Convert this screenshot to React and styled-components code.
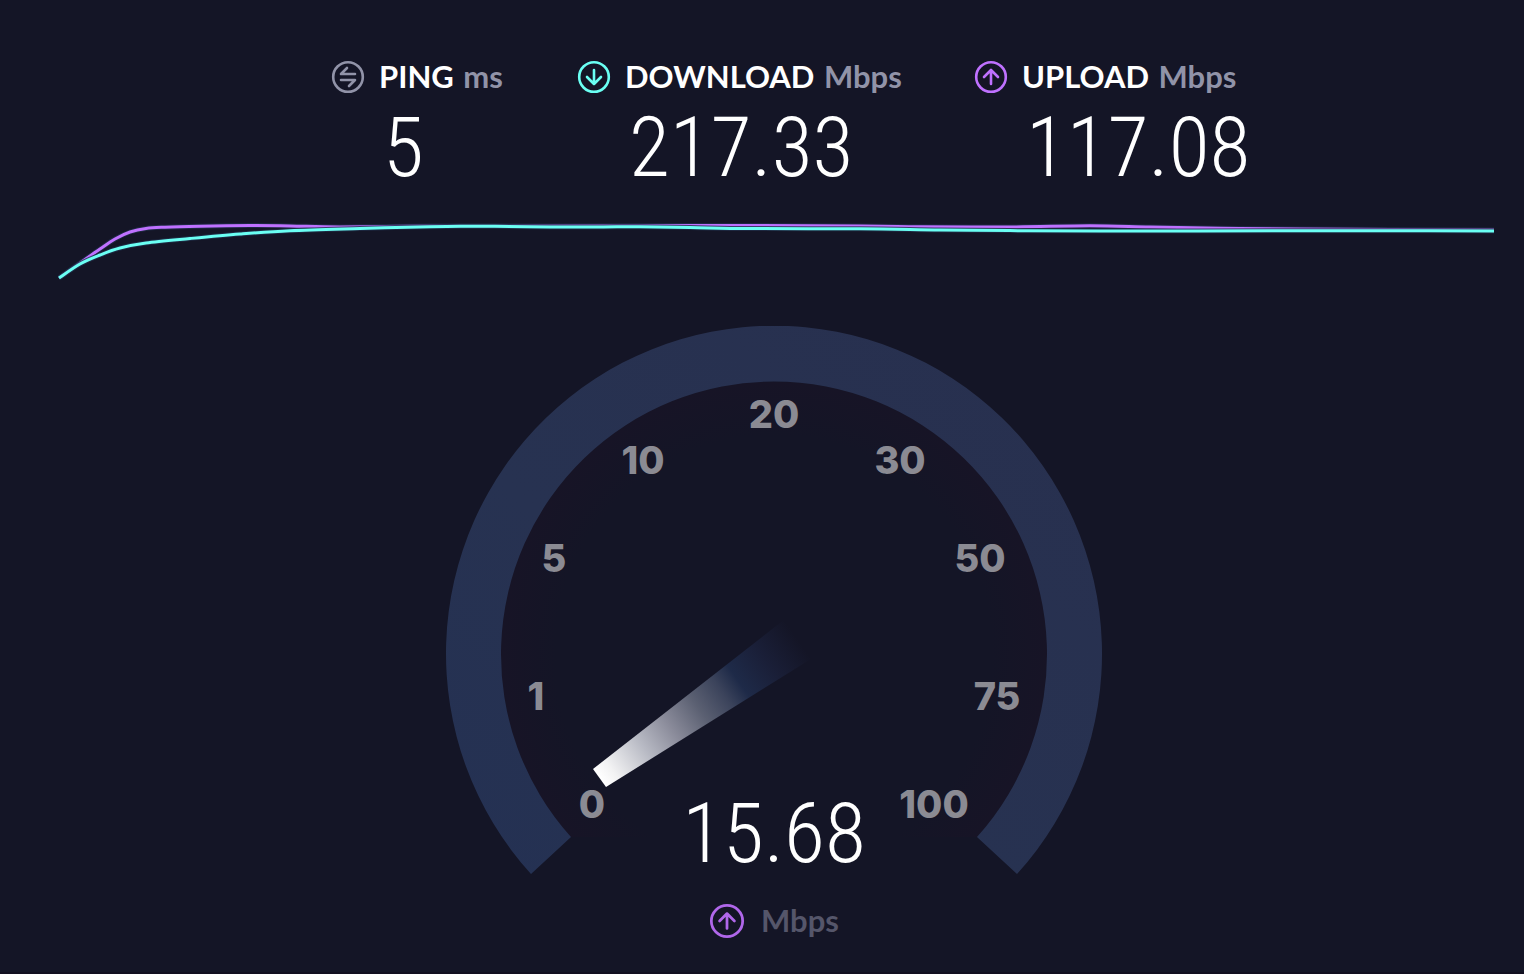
import React from 'react'
import styled, { createGlobalStyle } from 'styled-components';

const colors = {
  ping: '#9193a8',
  download: '#6afff3',
  upload: '#bf71ff',
};

const metrics = [
  { kind: 'ping', name: 'PING', unit: 'ms', value: '5' },
  { kind: 'download', name: 'DOWNLOAD', unit: 'Mbps', value: '217.33' },
  { kind: 'upload', name: 'UPLOAD', unit: 'Mbps', value: '117.08' },
];

const iconPaths = {
  ping: 'M-1 -9 L-7 -3 H7 M1 9 L7 3 H-7',
  download: 'M0 -7 V7 M-7 0 L0 7 L7 0',
  upload: 'M0 7 V-7 M-7 0 L0 -7 L7 0',
};

const downloadPoints = [
  [0, 58], [21, 44], [41, 35], [61, 28], [87, 23], [131, 18.5], [181, 14], [231, 10.7],
  [301, 8.5], [371, 6.7], [401, 6.2], [436, 6.3], [491, 7], [541, 7], [581, 6.7], [631, 7.5],
  [691, 8.6], [801, 8.7], [881, 10], [951, 10.6], [1041, 11], [1231, 10.8], [1341, 10.7], [1435, 11],
];

const uploadPoints = [
  [0, 58], [21, 43], [41, 29], [56, 19], [71, 12], [87, 8.4], [106, 7.2], [141, 6.3],
  [191, 5.6], [231, 5.9], [281, 7], [371, 6], [491, 6], [631, 5.4], [801, 6], [861, 6.8],
  [951, 7], [1031, 5.8], [1091, 7], [1161, 8.3], [1241, 9], [1435, 10],
];

const ticks = [
  { label: '0', x: 146, y: 478 },
  { label: '1', x: 90, y: 370 },
  { label: '5', x: 108, y: 232 },
  { label: '10', x: 197, y: 134 },
  { label: '20', x: 328, y: 88 },
  { label: '30', x: 454, y: 134 },
  { label: '50', x: 534, y: 232 },
  { label: '75', x: 551, y: 370 },
  { label: '100', x: 488, y: 478 },
];

// joins the samples with a smooth curve
const toPath = (points) => {
  let d = `M${points[0][0]} ${points[0][1]}`;
  for (let i = 0; i < points.length - 1; i++) {
    const a = points[i - 1] || points[i];
    const b = points[i];
    const c = points[i + 1];
    const e = points[i + 2] || c;
    d += ` C${b[0] + (c[0] - a[0]) / 6} ${b[1] + (c[1] - a[1]) / 6}`;
    d += ` ${c[0] - (e[0] - b[0]) / 6} ${c[1] - (e[1] - b[1]) / 6} ${c[0]} ${c[1]}`;
  }
  return d;
};

const StatusIcon = ({ kind, size = 34, color = colors[kind] }) => (
  <IconSvg viewBox="-17 -17 34 34" width={size} height={size} $color={color} aria-hidden="true">
    <circle r="14.8" />
    <path d={iconPaths[kind]} />
  </IconSvg>
);

const Chart = () => {
  const download = toPath(downloadPoints);
  const upload = toPath(uploadPoints);
  return (
    <ChartSvg viewBox="0 0 1435 62" preserveAspectRatio="none" role="img" aria-label="Speed over time">
      <Glow d={upload} />
      <Line d={upload} $color={colors.upload} />
      <Glow d={download} />
      <Line d={download} $color={colors.download} />
    </ChartSvg>
  );
};

const Dial = () => (
  <DialSvg viewBox="0 0 656 550">
    <defs>
      <linearGradient id="ring" x1="0" y1="1" x2="1" y2="0">
        <stop offset="0" stopColor="#243153" />
        <stop offset="0.4" stopColor="#273251" />
        <stop offset="1" stopColor="#28304f" />
      </linearGradient>
      <radialGradient id="shade" gradientUnits="userSpaceOnUse" cx="328" cy="328" r="273">
        <stop offset="0.8" stopColor="#171426" stopOpacity="0" />
        <stop offset="1" stopColor="#171426" />
      </radialGradient>
      <linearGradient id="needle" gradientUnits="userSpaceOnUse" x1="154" y1="452" x2="352" y2="314">
        <stop offset="0" stopColor="#ffffff" />
        <stop offset="0.06" stopColor="#f2f2f3" />
        <stop offset="0.22" stopColor="#b8bac4" />
        <stop offset="0.36" stopColor="#8a8b9a" />
        <stop offset="0.5" stopColor="#5b6072" />
        <stop offset="0.62" stopColor="#3b435b" />
        <stop offset="0.7" stopColor="#1e2a48" />
        <stop offset="0.84" stopColor="#1a1f38" />
        <stop offset="1" stopColor="#141526" />
      </linearGradient>
    </defs>
    <path d="M125 511 A273 273 0 1 1 531 511 Z" fill="url(#shade)" />
    <path d="M85 548 A328 328 0 1 1 571 548 L531 511 A273 273 0 1 0 125 511 Z" fill="url(#ring)" />
    <path d="M147 443 L339 293 L365 333 L160 461 Z" fill="url(#needle)" />
    {ticks.map((t) => (
      <Tick key={t.label} x={t.x} y={t.y + 14}>{t.label}</Tick>
    ))}
  </DialSvg>
);

const App = () => {
  return (
    <Page>
      <GlobalStyle />
      <Metrics>
        {metrics.map((m) => (
          <Metric key={m.kind}>
            <MetricTitle>
              <StatusIcon kind={m.kind} />
              <Label>{m.name} <Unit>{m.unit}</Unit></Label>
            </MetricTitle>
            <MetricValue>{m.value}</MetricValue>
          </Metric>
        ))}
      </Metrics>
      <Chart />
      <Gauge>
        <Dial />
        <Speed>15.68</Speed>
      </Gauge>
      <Footer>
        <StatusIcon kind="upload" size={36} color="#b067ea" />
        <FooterUnit>Mbps</FooterUnit>
      </Footer>
    </Page>
  )
}

const GlobalStyle = createGlobalStyle`
  body {
    margin: 0;
    background: #141526;
  }
`;

const Page = styled.main`
  display: flex;
  flex-direction: column;
  align-items: center;
  box-sizing: border-box;
  min-height: 100vh;
  padding: 60px 30px 0 54px;
  border-bottom: 2px solid #120f20;
  color: #ffffff;
  font-family: Lato, sans-serif;
`;

const Metrics = styled.section`
  display: grid;
  grid-template-columns: 174px 325px 265px;
  gap: 72px;
  padding-left: 22px;
`;

const Metric = styled.div`
  white-space: nowrap;
`;

const MetricTitle = styled.div`
  display: flex;
  align-items: center;
  gap: 14px;
  height: 34px;
`;

const IconSvg = styled.svg`
  flex: none;
  fill: none;
  stroke: ${(p) => p.$color};
  stroke-width: 2.6;
  stroke-linecap: round;
  stroke-linejoin: round;
`;

const Label = styled.span`
  padding-bottom: 2px;
  font-size: 31px;
  font-weight: 700;
  line-height: 34px;
`;

const Unit = styled.span`
  margin-left: 2px;
  color: #9193a8;
`;

const Figure = styled.div`
  font-family: 'Roboto Condensed', Roboto, sans-serif;
  font-size: 84px;
  font-weight: 300;
`;

const MetricValue = styled(Figure)`
  padding-left: 52px;
  line-height: 108px;
`;

const ChartSvg = styled.svg`
  display: block;
  align-self: stretch;
  height: 62px;
  margin: 18px 0 0 5px;
  overflow: visible;
`;

const Line = styled.path`
  fill: none;
  stroke: ${(p) => p.$color};
  stroke-width: 3;
`;

const Glow = styled.path`
  fill: none;
  stroke: #1f2d49;
  stroke-width: 5;
  stroke-opacity: 0.8;
`;

const Gauge = styled.section`
  display: grid;
  justify-items: center;
  align-items: end;
  width: 100%;
  max-width: 656px;
  margin-top: 44px;
`;

const DialSvg = styled.svg`
  display: block;
  grid-area: 1 / 1;
  width: 100%;
`;

const Tick = styled.text`
  fill: #8b8b93;
  font-family: Inter, sans-serif;
  font-size: 38px;
  font-weight: 800;
  text-anchor: middle;
`;

const Speed = styled(Figure)`
  grid-area: 1 / 1;
  line-height: 84px;
`;

const Footer = styled.div`
  display: flex;
  align-items: center;
  gap: 16px;
  margin-top: 27px;
`;

const FooterUnit = styled(Label)`
  color: #55566a;
`;

export default App
